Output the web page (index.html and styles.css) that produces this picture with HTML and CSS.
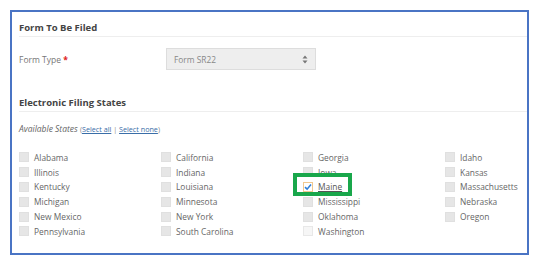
FILE: index.html
```html
<!DOCTYPE html>
<html lang="en">
<head>
  <meta charset="UTF-8">
  <title>Electronic Filing</title>
  <link rel="stylesheet" href="styles.css">
</head>
<body>

  <div class="panel">
    <h2>Form To Be Filed</h2>
    <div class="form-row">
      <label class="field-label">Form Type <span class="req">*</span></label>
      <div class="select">
        <span>Form SR22</span>
        <svg class="arrows" width="6" height="9" viewBox="0 0 6 9"><path d="M3 0.5 L5.5 3.5 L0.5 3.5 Z M3 8.5 L5.5 5.5 L0.5 5.5 Z" fill="#777"/></svg>
      </div>
    </div>

    <h2 class="second">Electronic Filing States</h2>
    <p class="available"><em>Available States</em> <span class="links">(<a href="#">Select all</a> | <a href="#">Select none</a>)</span></p>

    <div class="states">
      <div class="state"><span class="box"></span>Alabama</div>
      <div class="state"><span class="box"></span>Illinois</div>
      <div class="state"><span class="box"></span>Kentucky</div>
      <div class="state"><span class="box"></span>Michigan</div>
      <div class="state"><span class="box"></span>New Mexico</div>
      <div class="state"><span class="box"></span>Pennsylvania</div>

      <div class="state"><span class="box"></span>California</div>
      <div class="state"><span class="box"></span>Indiana</div>
      <div class="state"><span class="box"></span>Louisiana</div>
      <div class="state"><span class="box"></span>Minnesota</div>
      <div class="state"><span class="box"></span>New York</div>
      <div class="state"><span class="box"></span>South Carolina</div>

      <div class="state"><span class="box"></span>Georgia</div>
      <div class="state"><span class="box"></span>Iowa</div>
      <div class="state checked">
        <span class="box">
          <svg width="8" height="8" viewBox="0 0 8 8"><path d="M1 4.2 L3.1 6.2 L7 1.6" fill="none" stroke="#2f7fd8" stroke-width="1.6"/></svg>
        </span><u>Maine</u>
        <span class="highlight"></span>
      </div>
      <div class="state"><span class="box"></span>Mississippi</div>
      <div class="state"><span class="box"></span>Oklahoma</div>
      <div class="state"><span class="box light"></span>Washington</div>

      <div class="state"><span class="box"></span>Idaho</div>
      <div class="state"><span class="box"></span>Kansas</div>
      <div class="state"><span class="box"></span>Massachusetts</div>
      <div class="state"><span class="box"></span>Nebraska</div>
      <div class="state"><span class="box"></span>Oregon</div>
    </div>
  </div>

</body>
</html>
```

FILE: styles.css
```css
body {
  margin: 0;
  font-family: "Open Sans", Arial, sans-serif;
  background-color: #fff;
  color: #666;
}
.panel {
  margin: 10px;
  width: 519px;
  height: 245px;
  box-sizing: border-box;
  border: 2px solid #4a74c4;
  padding: 8px 0 0 7px;
  overflow: hidden;
}
h2 {
  margin: 0;
  font-size: 9.5px;
  line-height: 16px;
  font-weight: bold;
  color: #444;
  border-bottom: 1px solid #eee;
}
h2.second {
  margin-top: 25px;
}
.form-row {
  display: flex;
  align-items: center;
  margin-top: 11px;
}
.field-label {
  width: 147px;
  font-size: 8.5px;
  color: #777;
}
.req {
  color: #e02020;
  font-weight: bold;
}
.select {
  width: 150px;
  height: 22px;
  box-sizing: border-box;
  display: flex;
  align-items: center;
  justify-content: space-between;
  padding: 0 7px 0 7px;
  background-color: #eee;
  border: 1px solid #ddd;
  font-size: 8.4px;
  color: #888;
}
.available {
  margin: 11px 0 0 0;
  font-size: 8.5px;
  color: #666;
}
.links {
  font-size: 7.2px;
  color: #888;
}
.links a {
  color: #3a6ea8;
}
.states {
  display: grid;
  grid-auto-flow: column;
  grid-template-rows: repeat(6, 14.8px);
  grid-template-columns: repeat(3, 142px) auto;
  margin-top: 16px;
}
.state {
  position: relative;
  display: flex;
  align-items: center;
  font-size: 8.4px;
  color: #666;
}
.box {
  width: 10px;
  height: 10px;
  box-sizing: border-box;
  background-color: #e6e6e6;
  border: 1px solid #e0e0e0;
  margin-right: 5px;
  display: flex;
  align-items: center;
  justify-content: center;
}
.box.light {
  background-color: #f6f6f6;
  border-color: #e8e8e8;
}
.checked .box {
  background-color: #fff;
  border-color: #f1c88f;
}
.checked u {
  color: #555;
}
.highlight {
  position: absolute;
  left: -10px;
  top: -7px;
  width: 59px;
  height: 23px;
  box-sizing: border-box;
  border: 4px solid #19a74b;
}
```
